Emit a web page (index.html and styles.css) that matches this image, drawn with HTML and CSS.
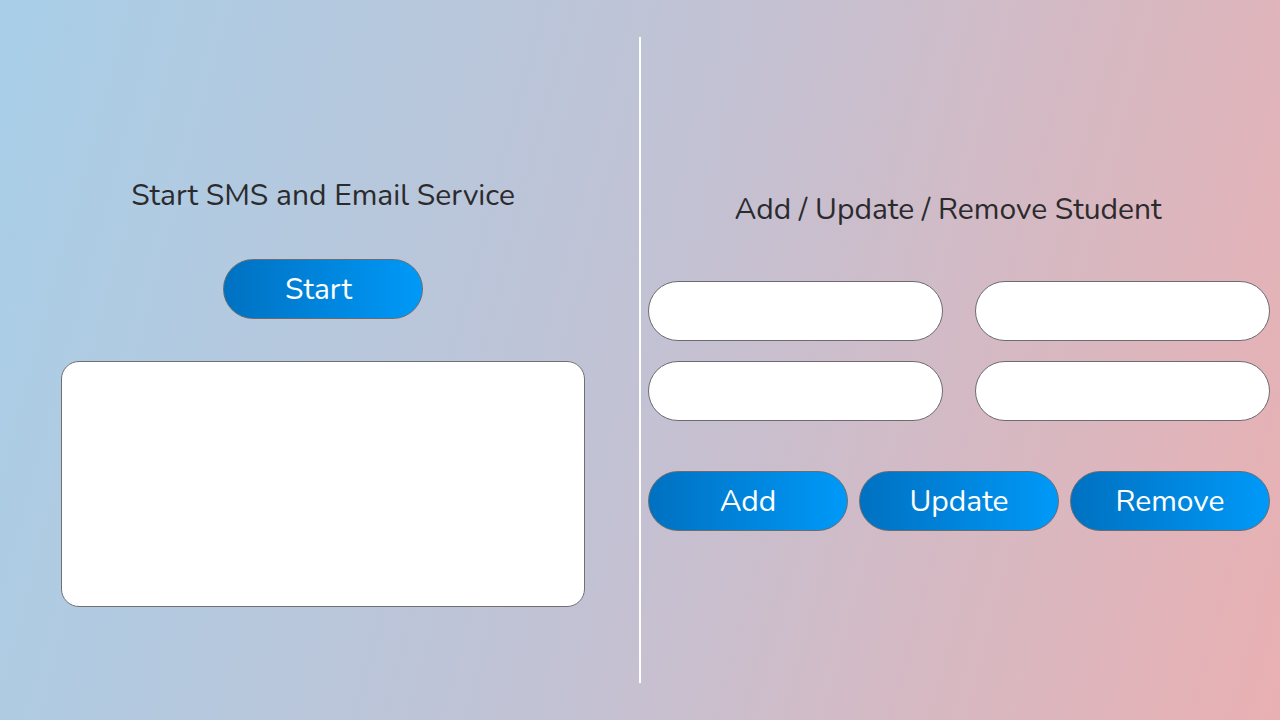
FILE: index.html
```html
<!DOCTYPE html>
<html>
<head>
<meta charset="utf-8">
<link rel="stylesheet" href="styles.css">
</head>
<body>
<main class="page">
  <section class="panel panel-left">
    <h2 class="title title-left">Start SMS and Email Service</h2>
    <button class="btn btn-start">Start</button>
    <textarea class="log"></textarea>
  </section>
  <div class="divider"></div>
  <section class="panel panel-right">
    <h2 class="title title-right">Add / Update / Remove Student</h2>
    <div class="fields">
      <input class="field" type="text">
      <input class="field" type="text">
      <input class="field" type="text">
      <input class="field" type="text">
    </div>
    <div class="actions">
      <button class="btn">Add</button>
      <button class="btn">Update</button>
      <button class="btn">Remove</button>
    </div>
  </section>
</main>
</body>
</html>
```
FILE: styles.css
```css
* { box-sizing: border-box; }
html, body { margin: 0; padding: 0; }
body {
  width: 1280px;
  height: 720px;
  overflow: hidden;
  font-family: "Nunito", "Lato", "Open Sans", sans-serif;
  background: linear-gradient(105deg, #a8cfe8 0%, #c2c2d4 50%, #e9b0b2 100%);
}
.page {
  display: flex;
  height: 720px;
  padding: 37px 0;
}
.panel-left {
  width: 640px;
  display: flex;
  flex-direction: column;
  align-items: center;
  padding-top: 139px;
}
.divider {
  width: 2px;
  background: #ffffff;
  height: 646px;
}
.panel-right {
  flex: 1;
  padding: 153px 10px 0 7px;
  display: flex;
  flex-direction: column;
  align-items: stretch;
}
.title {
  margin: 0;
  font-weight: 400;
  font-size: 30px;
  line-height: 40px;
  color: #2b2b2e;
  white-space: nowrap;
}
.title-left { margin-left: 7px; }
.title-right { text-align: center; padding-right: 22px; }
.btn {
  width: 200px;
  height: 60px;
  border-radius: 30px;
  border: 1px solid #6c6c70;
  background: linear-gradient(90deg, #0071c1 0%, #0099f8 100%);
  color: #ffffff;
  font-family: inherit;
  font-size: 30px;
  padding: 0;
  cursor: pointer;
}
.btn-start { margin-top: 43px; margin-left: 6px; padding-right: 8px; }
.log {
  margin-top: 42px;
  margin-left: 6px;
  width: 524px;
  height: 246px;
  border: 1px solid #707074;
  border-radius: 18px;
  background: #ffffff;
  resize: none;
  outline: none;
}
.fields {
  margin-top: 51px;
  display: grid;
  grid-template-columns: 295px 295px;
  column-gap: 32px;
  row-gap: 20px;
}
.field {
  height: 60px;
  border: 1px solid #6c6c70;
  border-radius: 30px;
  background: #ffffff;
  outline: none;
}
.actions {
  margin-top: 50px;
  display: flex;
  gap: 11px;
}
```
